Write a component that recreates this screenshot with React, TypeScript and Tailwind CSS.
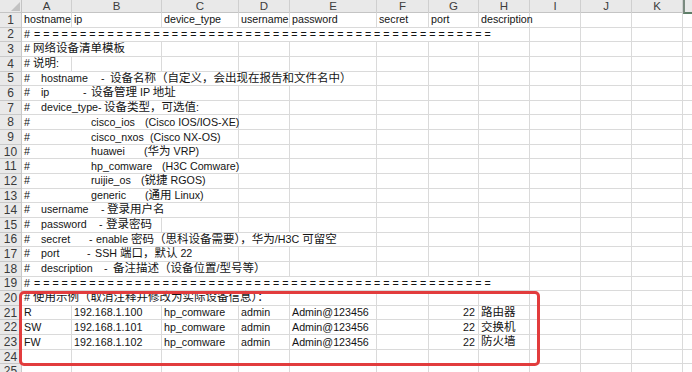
import React from "react";

const cols = ["A", "B", "C", "D", "E", "F", "G", "H", "I", "J", "K", "L"];
const starts = [22, 72, 162, 239, 290, 377, 429, 479, 530, 581, 632, 683];

const spanClass: Record<number, string> = {
    1: "col-span-1",
    2: "col-span-2",
    3: "col-span-3",
    4: "col-span-4",
    5: "col-span-5",
    8: "col-span-8",
};

type Piece = [number, string];
type Cell = { col: number; span?: number; pieces?: Piece[]; text?: string; right?: boolean };

const eq = "=".repeat(50);

const rows: Cell[][] = [
    [
        { col: 0, text: "hostname" },
        { col: 1, text: "ip" },
        { col: 2, text: "device_type" },
        { col: 3, text: "username" },
        { col: 4, text: "password" },
        { col: 5, text: "secret" },
        { col: 6, text: "port" },
        { col: 7, text: "description" },
    ],
    [{ col: 0, span: 8, pieces: [[24, "#"], [34, eq]] }],
    [{ col: 0, span: 2, pieces: [[24, "#"], [33, "网络设备清单模板"]] }],
    [{ col: 0, pieces: [[24, "#"], [33, "说明:"]] }],
    [{ col: 0, span: 5, pieces: [[24, "#"], [41, "hostname"], [101, "-"], [110, "设备名称（自定义，会出现在报告和文件名中）"]] }],
    [{ col: 0, span: 3, pieces: [[24, "#"], [41, "ip"], [83, "-"], [91, "设备管理 IP 地址"]] }],
    [{ col: 0, span: 3, pieces: [[24, "#"], [41, "device_type"], [98, "-"], [104, "设备类型，可选值:"]] }],
    [{ col: 0, span: 3, pieces: [[24, "#"], [91, "cisco_ios"], [145, "(Cisco IOS/IOS-XE)"]] }],
    [{ col: 0, span: 3, pieces: [[24, "#"], [91, "cisco_nxos"], [150, "(Cisco NX-OS)"]] }],
    [{ col: 0, span: 3, pieces: [[24, "#"], [91, "huawei"], [144, "(华为 VRP)"]] }],
    [{ col: 0, span: 4, pieces: [[24, "#"], [91, "hp_comware"], [162, "(H3C Comware)"]] }],
    [{ col: 0, span: 3, pieces: [[24, "#"], [91, "ruijie_os"], [141, "(锐捷 RGOS)"]] }],
    [{ col: 0, span: 3, pieces: [[24, "#"], [91, "generic"], [145, "(通用 Linux)"]] }],
    [{ col: 0, span: 3, pieces: [[24, "#"], [41, "username"], [101, "-"], [107, "登录用户名"]] }],
    [{ col: 0, span: 2, pieces: [[24, "#"], [41, "password"], [99, "-"], [106, "登录密码"]] }],
    [{ col: 0, span: 5, pieces: [[24, "#"], [41, "secret"], [89, "-"], [96, "enable 密码（思科设备需要），华为/H3C 可留空"]] }],
    [{ col: 0, span: 3, pieces: [[24, "#"], [41, "port"], [87, "-"], [95, "SSH 端口，默认 22"]] }],
    [{ col: 0, span: 4, pieces: [[24, "#"], [41, "description"], [104, "-"], [113, "备注描述（设备位置/型号等）"]] }],
    [{ col: 0, span: 8, pieces: [[24, "#"], [34, eq]] }],
    [{ col: 0, span: 4, pieces: [[24, "#"], [33, "使用示例（取消注释并修改为实际设备信息）："]] }],
    [
        { col: 0, text: "R" },
        { col: 1, text: "192.168.1.100" },
        { col: 2, text: "hp_comware" },
        { col: 3, text: "admin" },
        { col: 4, text: "Admin@123456" },
        { col: 6, text: "22", right: true },
        { col: 7, text: "路由器" },
    ],
    [
        { col: 0, text: "SW" },
        { col: 1, text: "192.168.1.101" },
        { col: 2, text: "hp_comware" },
        { col: 3, text: "admin" },
        { col: 4, text: "Admin@123456" },
        { col: 6, text: "22", right: true },
        { col: 7, text: "交换机" },
    ],
    [
        { col: 0, text: "FW" },
        { col: 1, text: "192.168.1.102" },
        { col: 2, text: "hp_comware" },
        { col: 3, text: "admin" },
        { col: 4, text: "Admin@123456" },
        { col: 6, text: "22", right: true },
        { col: 7, text: "防火墙" },
    ],
    [],
    [],
];

// fill the gaps so every row has a full set of bordered cells
function fillRow(cells: Cell[]): Cell[] {
    const out: Cell[] = [];
    let c = 0;
    const sorted = [...cells].sort((a, b) => a.col - b.col);
    for (const cell of sorted) {
        while (c < cell.col) out.push({ col: c++ });
        out.push(cell);
        c += cell.span ?? 1;
    }
    while (c < cols.length) out.push({ col: c++ });
    return out;
}

// chinese runs are set a bit larger than the latin text, like in the sheet
function Mixed({ text }: { text: string }) {
    const parts = text.split(/([\u3000-\u9fff\uff00-\uffef]+)/);
    return (
        <>
            {parts.map((p, i) =>
                i % 2 === 1 ? (
                    <span key={i} className="text-[11.5px]">
                        {p}
                    </span>
                ) : (
                    p
                )
            )}
        </>
    );
}

function CellText({ cell }: { cell: Cell }) {
    const x0 = starts[cell.col];
    if (cell.pieces) {
        const first = cell.pieces[0][0];
        return (
            <div className="whitespace-pre" style={{ paddingLeft: first - x0 }}>
                {cell.pieces.map(([x, t], i) => {
                    const next = cell.pieces![i + 1];
                    const isEq = t.startsWith("==");
                    return (
                        <span
                            key={i}
                            className={`inline-block ${isEq ? "tracking-[2.95px]" : ""}`}
                            style={next ? { width: next[0] - x } : undefined}
                        >
                            <Mixed text={t} />
                        </span>
                    );
                })}
            </div>
        );
    }
    if (!cell.text) return null;
    if (cell.right) return <div className="w-full text-right pr-[3px]">{cell.text}</div>;
    return (
        <div className="whitespace-pre pl-[2px]">
            <Mixed text={cell.text} />
        </div>
    );
}

export default function App() {
    const grid =
        "grid grid-cols-[22px_50px_90px_77px_51px_87px_52px_50px_51px_51px_51px_51px_60px]";

    return (
        <div
            className="relative w-[692px] h-[372px] overflow-hidden bg-white text-[10.7px] text-[#141414]"
            style={{ fontFamily: '"Liberation Sans", "Noto Sans CJK SC", sans-serif' }}
        >
            {/* column header */}
            <div className={`${grid} h-[13px] bg-[#e9e9e9] border-b border-[#c4c4c4]`}>
                <div className="relative border-r border-[#c4c4c4]">
                    <svg className="absolute inset-0" width="22" height="13" viewBox="0 0 22 13">
                        <polygon points="20,2 20,11 11,11" fill="#c2c2c2" />
                    </svg>
                </div>
                {cols.map((c, i) => (
                    <div
                        key={c}
                        className={`flex items-center justify-center leading-none text-[11.5px] text-[#3c3c3c] border-r border-[#cfcfcf] ${
                            i === 11 ? "border-l-2 border-l-[#7a8a7f] border-b-2 border-b-[#5f7f68]" : ""
                        }`}
                    >
                        {c}
                    </div>
                ))}
            </div>

            {rows.map((r, ri) => (
                <div key={ri} className={`${grid} h-[14.65px]`}>
                    <div className="flex items-center justify-center bg-[#e9e9e9] border-r border-b border-[#c9c9c9] text-[12px] leading-none text-[#3a3a3a]">
                        {ri + 1}
                    </div>
                    {fillRow(r).map((cell) => (
                        <div
                            key={cell.col}
                            className={`${spanClass[cell.span ?? 1]} flex items-center leading-none overflow-visible border-r border-b border-[#dadada]`}
                        >
                            <CellText cell={cell} />
                        </div>
                    ))}
                </div>
            ))}

            {/* highlight box over the example rows */}
            <div className="absolute left-[19px] top-[291px] w-[521px] h-[75px] border-[3px] border-[#e23c3d] rounded-[5px]" />
        </div>
    );
}
